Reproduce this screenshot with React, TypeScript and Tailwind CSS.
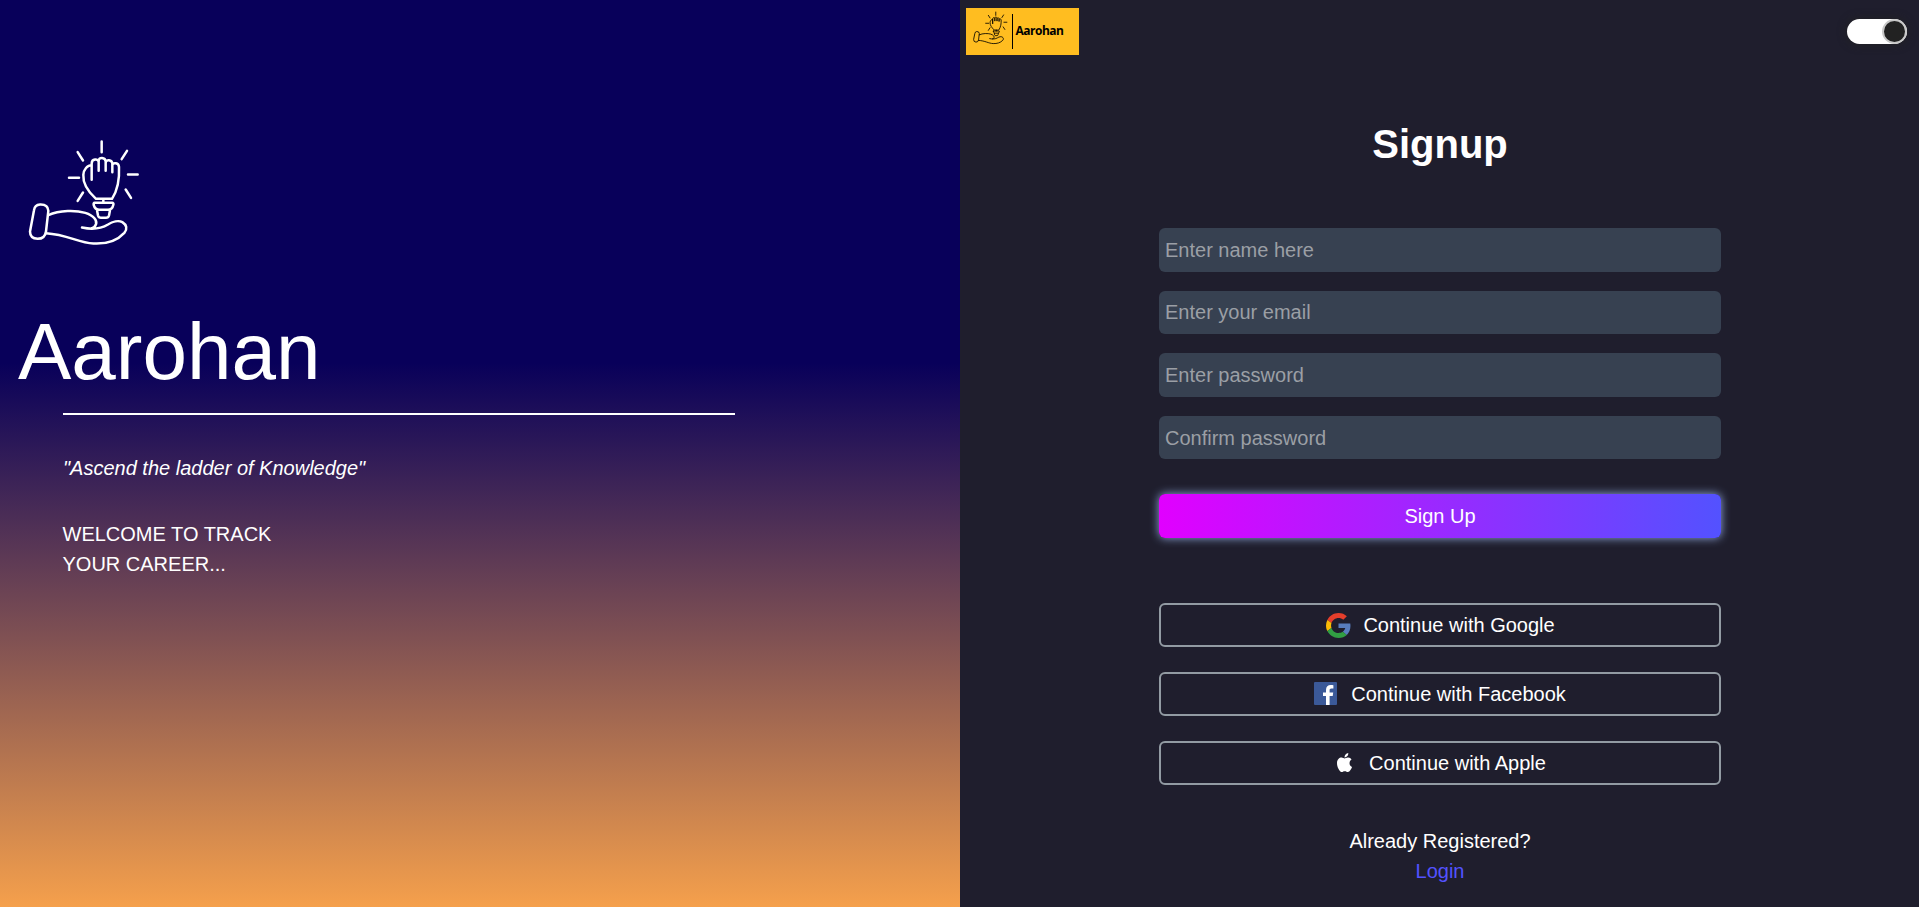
import React from "react";

function HandBulb({ className, strokeWidth }: { className: string; strokeWidth: number }) {
  return (
    <svg
      viewBox="0 0 330 312"
      className={className}
      fill="none"
      stroke="currentColor"
      strokeWidth={strokeWidth}
      strokeLinecap="round"
      strokeLinejoin="round"
      overflow="visible"
    >
      <path d="M221 6V38M149 38L165 63M297 34L281 59M123 115H153M300 105H329M149 184L165 159M309 175L293 150" />
      <path d="M204 178C182 158 164 134 166 106C167 90 178 77 191 77V121V72C191 58 211 56 212 68V94V64C212 52 232 52 233 66V94V70C234 58 252 60 253 72V98V76C256 68 272 70 273 82C275 120 270 150 252 178Z" />
      <path d="M200 190H252Q258 190 256 196C254 206 248 211 240 211H215C205 211 199 204 197 196Q196 190 200 190ZM207 212L210 228Q212 235 219 235H234Q241 235 243 228L246 212M226 181V190" />
      <path d="M18 212Q20 196 36 195Q60 194 61 214L54 276Q51 298 29 298Q6 297 6 276Z" />
      <path d="M61 227C95 211 145 212 172 220C198 228 208 244 204 254C201 262 196 266 190 267M162 264C190 270 215 270 240 255C254 246 272 242 283 248C296 256 299 268 289 280C267 304 232 314 196 312C150 310 120 285 54 281" />
    </svg>
  );
}

function GoogleIcon() {
  return (
    <svg viewBox="0 0 48 48" className="ml-px size-[25px]">
      <path fill="#e43e2b" d="M24 9.5c3.54 0 6.71 1.22 9.21 3.6l6.85-6.85C35.9 2.38 30.47 0 24 0 14.62 0 6.51 5.38 2.56 13.22l7.98 6.19C12.43 13.72 17.74 9.5 24 9.5z" />
      <path fill="#587dbd" d="M46.98 24.55c0-1.57-.15-3.09-.38-4.55H24v9.02h12.94c-.58 2.96-2.26 5.48-4.78 7.18l7.73 6c4.51-4.18 7.09-10.36 7.09-17.65z" />
      <path fill="#fabb05" d="M10.53 28.59c-.48-1.45-.76-2.99-.76-4.59s.27-3.14.76-4.59l-7.98-6.19C.92 16.46 0 20.12 0 24c0 3.88.92 7.54 2.56 10.78l7.97-6.19z" />
      <path fill="#319f43" d="M24 48c6.48 0 11.93-2.13 15.89-5.81l-7.73-6c-2.15 1.45-4.92 2.3-8.16 2.3-6.26 0-11.57-4.22-13.47-9.91l-7.98 6.19C6.51 42.62 14.62 48 24 48z" />
    </svg>
  );
}

function FacebookIcon() {
  return (
    <svg viewBox="0 0 23 23" className="mb-px size-[23px]">
      <rect width="23" height="23" rx="1" fill="#3b5998" />
      <path fill="#fff" d="M12 23V14H9V10.6H12V8C12 4.8 13.9 3 16.7 3C18 3 19 3.1 19.4 3.2V6.4H17.4C15.9 6.4 15.6 7.2 15.6 8.3V10.6H19.2L18.7 14H15.6V23Z" />
    </svg>
  );
}

function AppleIcon() {
  return (
    <svg viewBox="4 32 376 448" className="mb-px ml-[3px] h-[19px] w-[15px]" preserveAspectRatio="none">
      <path fill="#fff" d="M318.7 268.7c-.2-36.7 16.4-64.4 50-84.8-18.8-26.9-47.2-41.7-84.7-44.6-35.5-2.8-74.3 20.7-88.5 20.7-15 0-49.4-19.7-76.4-19.7C63.3 141.2 4 184.8 4 273.5q0 39.3 14.4 81.2c12.8 36.7 59 126.7 107.2 125.2 25.2-.6 43-17.9 75.8-17.9 31.8 0 48.3 17.9 76.4 17.9 48.6-.7 90.4-82.5 102.6-119.3-65.2-30.7-61.7-90-61.7-91.9zm-56.6-164.2c27.3-32.4 24.8-61.9 24-72.5-24.1 1.4-52 16.4-67.9 34.9-17.5 19.8-27.8 44.3-25.6 71.9 26.1 2 49.9-11.4 69.5-34.3z" />
    </svg>
  );
}

const fields = [
  { type: "text", label: "Enter name here" },
  { type: "email", label: "Enter your email" },
  { type: "password", label: "Enter password" },
  { type: "password", label: "Confirm password" },
];

const providers = [
  { name: "Google", icon: <GoogleIcon />, gap: "gap-3" },
  { name: "Facebook", icon: <FacebookIcon />, gap: "gap-[14px]" },
  { name: "Apple", icon: <AppleIcon />, gap: "gap-[17px]" },
];

export default function App() {
  return (
    <div className="flex h-[907px] w-full overflow-hidden font-['Liberation_Sans',Arial,sans-serif] text-[20px] leading-[30px] text-white">
      <section className="w-[960px] shrink-0 bg-[linear-gradient(to_bottom,#08005a_40%,#f5a04c)] pt-[139px]">
        <HandBulb className="ml-[28px] h-[105px] w-[110px]" strokeWidth={7.5} />
        <h1 className="mt-[48px] ml-[18px] text-[80px] leading-[120px]">Aarohan</h1>
        <div className="ml-[63px]">
          <hr className="mt-px w-[672px] border-t-2 border-white" />
          <p className="mt-[38px] italic">"Ascend the ladder of Knowledge"</p>
          <p className="mt-[36px] -ml-[0.5px]">
            WELCOME TO TRACK
            <br />
            YOUR CAREER...
          </p>
        </div>
      </section>

      <section className="flex min-w-0 flex-1 flex-col items-center bg-[#1f1e2d]">
        <header className="flex h-[63px] w-full items-start justify-between pt-2 pr-3 pl-[6px]">
          <div className="flex h-[47px] w-[113px] items-center bg-[#ffbd20] text-black">
            <HandBulb className="mb-[9px] ml-[7px] h-[33px] w-[34px]" strokeWidth={8} />
            <div className="ml-[5px] h-[35px] w-px bg-black" />
            <span className="mb-[2px] ml-[2.5px] font-['Open_Sans','Noto_Sans',sans-serif] text-[12px] leading-4 font-bold tracking-[-0.5px]">Aarohan</span>
          </div>
          <button aria-label="Toggle theme" className="mt-[11px] flex h-[25px] w-[60px] justify-end rounded-full bg-white shadow-[0_0_10px_#222]">
            <span className="size-[25px] rounded-full border-2 border-[#c8c8c8] bg-[#222]" />
          </button>
        </header>

        <div className="flex flex-col items-center pl-px">
          <h2 className="mt-[51px] text-[40px] leading-[60px] font-bold">Signup</h2>

          <form className="mt-[54px] flex w-[562px] flex-col" onSubmit={(e) => e.preventDefault()}>
            <div className="flex flex-col gap-[19px]">
              {fields.map((f) => (
                <input
                  key={f.label}
                  type={f.type}
                  placeholder={f.label}
                  className="h-[43.6px] w-full rounded-[6px] bg-[#374151] px-[6px] pt-px placeholder:text-[#9b9fa5]"
                />
              ))}
            </div>
            <button className="mt-[35px] h-11 rounded-[6px] bg-[linear-gradient(to_right,#e100ff,#5352ff)] shadow-[0_0_10px_#94abe0]">Sign Up</button>
            <div className="mt-[65px] flex flex-col gap-[25px]">
              {providers.map((p) => (
                <button key={p.name} type="button" className="flex h-11 items-center justify-center rounded-[6px] border-2 border-[#929ba3]">
                  <span className={"flex items-center " + p.gap}>
                    {p.icon}
                    <span>Continue with {p.name}</span>
                  </span>
                </button>
              ))}
            </div>
          </form>

          <p className="mt-[41px] text-center">
            Already Registered?
            <br />
            <a className="text-[#5352ff]">Login</a>
          </p>
        </div>
      </section>
    </div>
  );
}
